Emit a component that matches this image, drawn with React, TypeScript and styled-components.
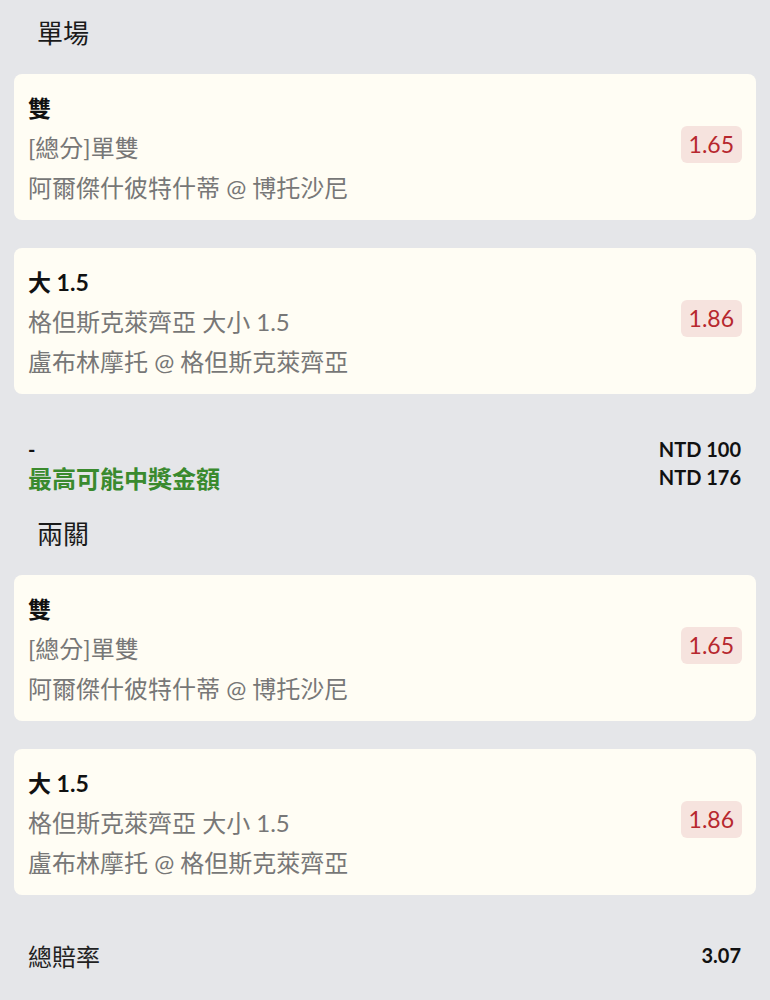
import React from 'react';
import styled, { createGlobalStyle } from 'styled-components';

const GlobalStyle = createGlobalStyle`
  html, body {
    margin: 0;
    padding: 0;
    background: #e5e6e9;
  }
  body {
    font-family: Lato, "Noto Sans CJK TC", sans-serif;
    color: #111;
  }
`;

const Page = styled.div`
  padding: 0 14px;
  display: flex;
  flex-direction: column;
`;

const SectionTitle = styled.div<{ $top: number }>`
  margin: ${p => p.$top}px 0 25px 23px;
  font-size: 26px;
  line-height: 32px;
  color: #1a1a1a;
`;

const CardList = styled.div`
  display: flex;
  flex-direction: column;
  gap: 28px;
`;

const Card = styled.div`
  background: #fffdf4;
  border-radius: 8px;
  padding: 14px 14px 12px;
  display: flex;
  align-items: center;
  justify-content: space-between;
  min-height: 119px;
`;

const Info = styled.div`
  display: flex;
  flex-direction: column;
`;

const Pick = styled.div`
  font-size: 23px;
  font-weight: 700;
  line-height: 40px;
  color: #111;
`;

const Detail = styled.div`
  font-size: 24px;
  line-height: 40px;
  color: #777;
`;

const Odds = styled.div`
  background: #f6e3de;
  color: #b7282e;
  font-size: 23px;
  border-radius: 6px;
  padding: 0 8px;
  height: 37px;
  line-height: 37px;
  margin-top: -8px;
`;

const Summary = styled.div`
  margin: 41px 15px 0 14px;
  display: flex;
  flex-direction: column;
`;

const SummaryRow = styled.div`
  display: flex;
  justify-content: space-between;
  align-items: center;
  height: 28px;
`;

const Dash = styled.span`
  font-size: 20px;
  font-weight: 700;
`;

const Winning = styled.span`
  font-size: 24px;
  font-weight: 700;
  color: #3a8a2e;
`;

const Amount = styled.span`
  font-size: 20px;
  font-weight: 700;
  color: #111;
`;

const TotalRow = styled.div`
  margin: 46px 15px 0 14px;
  height: 28px;
  display: flex;
  justify-content: space-between;
  align-items: center;
`;

const TotalLabel = styled.span`
  font-size: 24px;
  color: #222;
`;

type Bet = { pick: string; market: string; match: string; odds: string };

const bets: Bet[] = [
  { pick: '雙', market: '[總分]單雙', match: '阿爾傑什彼特什蒂 @ 博托沙尼', odds: '1.65' },
  { pick: '大 1.5', market: '格但斯克萊齊亞 大小 1.5', match: '盧布林摩托 @ 格但斯克萊齊亞', odds: '1.86' },
];

const BetCard: React.FC<{ bet: Bet }> = ({ bet }) => (
  <Card>
    <Info>
      <Pick>{bet.pick}</Pick>
      <Detail>{bet.market}</Detail>
      <Detail>{bet.match}</Detail>
    </Info>
    <Odds>{bet.odds}</Odds>
  </Card>
);

export default function App() {
  return (
    <>
      <GlobalStyle />
      <Page>
        <SectionTitle $top={17}>單場</SectionTitle>
        <CardList>
          {bets.map(b => <BetCard key={b.pick} bet={b} />)}
        </CardList>
        <Summary>
          <SummaryRow>
            <Dash>-</Dash>
            <Amount>NTD 100</Amount>
          </SummaryRow>
          <SummaryRow>
            <Winning>最高可能中獎金額</Winning>
            <Amount>NTD 176</Amount>
          </SummaryRow>
        </Summary>
        <SectionTitle $top={27}>兩關</SectionTitle>
        <CardList>
          {bets.map(b => <BetCard key={b.pick} bet={b} />)}
        </CardList>
        <TotalRow>
          <TotalLabel>總賠率</TotalLabel>
          <Amount>3.07</Amount>
        </TotalRow>
      </Page>
    </>
  );
}
